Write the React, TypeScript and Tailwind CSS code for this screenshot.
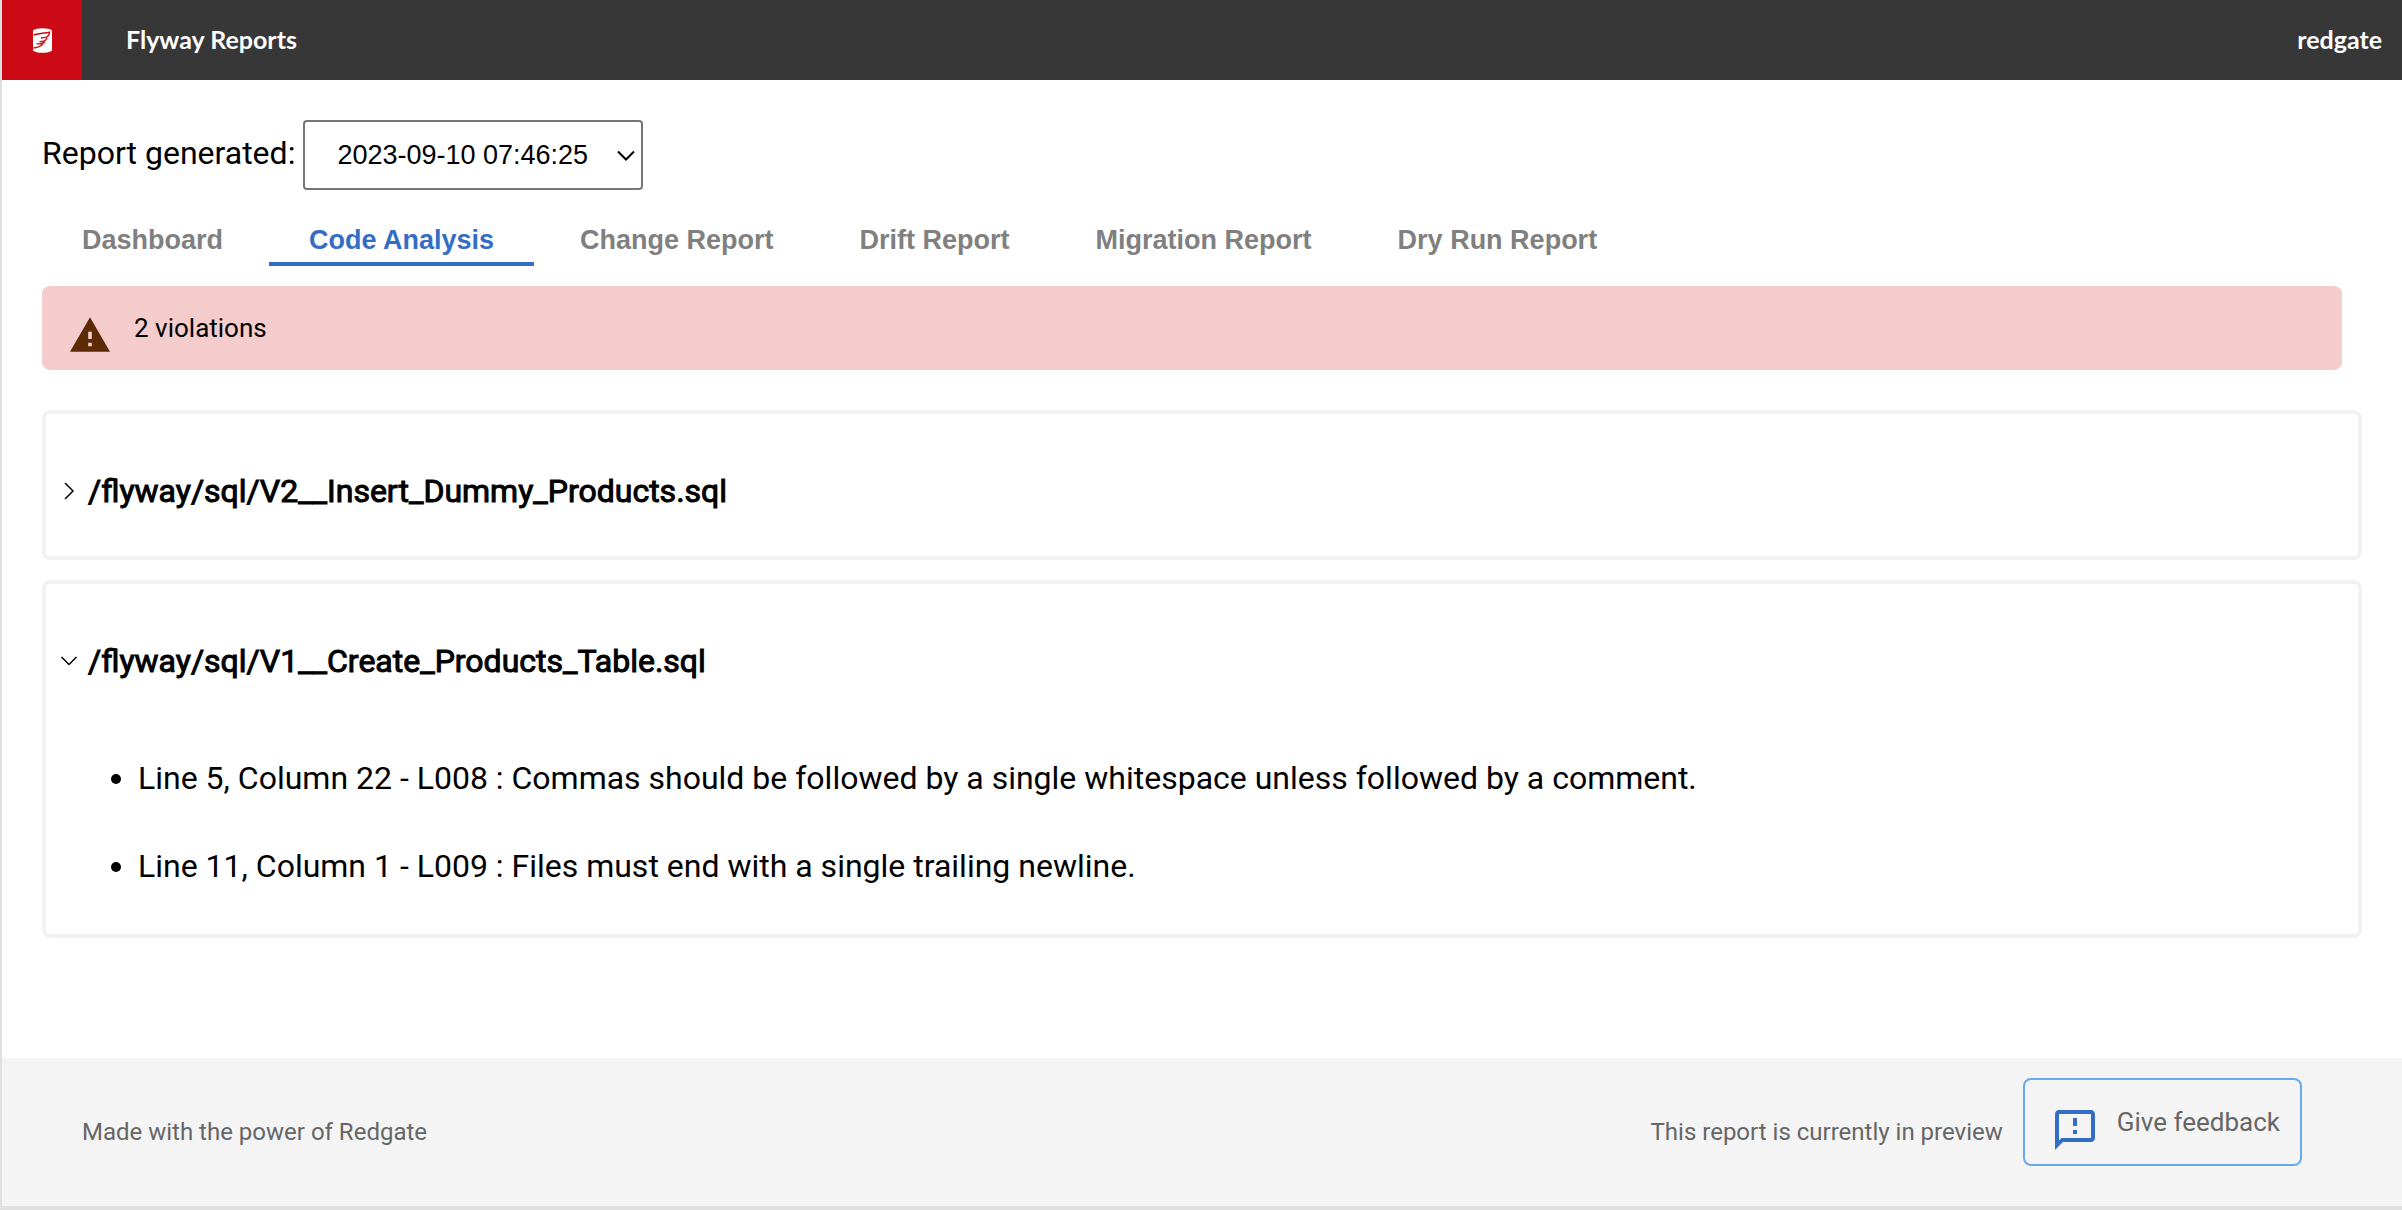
import { useState, type ReactNode } from "react";

const tabs = ["Dashboard", "Code Analysis", "Change Report", "Drift Report", "Migration Report", "Dry Run Report"];

function FlywayLogo() {
  return (
    <svg viewBox="0 0 19 25" className="h-[25px] w-[19px]" aria-hidden="true">
      <path d="M0 2.600C3 -.5 16 -.5 19 2.600V22.400C16 25.500 3 25.500 0 22.400Z" fill="#fff" />
      <path
        d="M.5 7C6 5.400 11 5.200 16.600 4.200C16.400 7 15 8.800 12 9.400L8 10M14 9.600C13.400 12 12 13.200 9 13.500L6.500 13.800M11.600 13.600C10.500 16 8.500 16.500 3.500 15.600M9.500 16C8 18.800 5 19.400 .5 20"
        fill="none"
        stroke="#cc0a15"
        strokeWidth="1.4"
      />
    </svg>
  );
}

function WarningIcon() {
  return (
    <svg viewBox="1 2 22 19" className="mt-3 h-[35px] w-10 shrink-0" fill="#5c2b06" aria-hidden="true">
      <path d="M1 21h22L12 2 1 21zm12-3h-2v-2h2v2zm0-4h-2v-4h2v4z" />
    </svg>
  );
}

function FeedbackIcon() {
  return (
    <svg viewBox="2 2 20 20" className="mt-4 size-10 shrink-0" fill="#346ec4" aria-hidden="true">
      <path d="M20 2H4c-1.1 0-1.99.9-1.99 2L2 22l4-4h14c1.1 0 2-.9 2-2V4c0-1.1-.9-2-2-2zm0 14H5.17l-.59.59-.58.58V4h16v12zm-9-4h2v2h-2zm0-6h2v4h-2z" />
    </svg>
  );
}

function FileCard({ name, initiallyOpen = false, children }: { name: string; initiallyOpen?: boolean; children?: ReactNode }) {
  const [open, setOpen] = useState(initiallyOpen);
  return (
    <section className="rounded-lg border-4 border-[#f2f2f2]">
      <h2>
        <button
          type="button"
          aria-expanded={open}
          onClick={() => setOpen(!open)}
          className="flex h-[142px] w-full items-center gap-2.5 pt-3 pl-3.5 text-left text-[32px] [-webkit-text-stroke:1px_black]"
        >
          <svg viewBox="0 0 18 18" className="size-[18px]" fill="none" stroke="currentColor" strokeWidth="1.5" aria-hidden="true">
            <path d={open ? "M1.500 5l7.500 7.500 7.500-7.500" : "M5 1l8 8-8 8"} />
          </svg>
          {name}
        </button>
      </h2>
      {open && children}
    </section>
  );
}

export default function App() {
  const [active, setActive] = useState("Code Analysis");
  return (
    <div className="flex min-h-screen flex-col border-b-4 border-l-2 border-[#e0e0e0] bg-white font-['Roboto',sans-serif] text-black">
      <header className="flex h-20 items-center bg-[#373737] pr-5 font-['Lato',sans-serif] font-bold text-white">
        <div className="flex size-20 items-center justify-center bg-[#cc0a15]">
          <FlywayLogo />
        </div>
        <h1 className="ml-11 text-[25px]">Flyway Reports</h1>
        <span className="ml-auto text-[25px]">redgate</span>
      </header>

      <main className="grow px-10 pt-10">
        <div className="flex items-baseline gap-2">
          <label htmlFor="report" className="text-[32px]">
            Report generated:
          </label>
          <div className="relative">
            <select
              id="report"
              className="h-[70px] w-[340px] appearance-none rounded-sm border-2 border-[#767676] bg-white pl-8 font-['Liberation_Sans',sans-serif] text-[27px]"
            >
              <option>2023-09-10 07:46:25</option>
            </select>
            <svg
              viewBox="0 0 18 12"
              className="pointer-events-none absolute top-[30px] right-2 h-3 w-[18px]"
              fill="none"
              stroke="currentColor"
              strokeWidth="2"
              aria-hidden="true"
            >
              <path d="M1 1.500l8 8 8-8" />
            </svg>
          </div>
        </div>

        <nav className="mt-4 flex gap-1.5 font-['Liberation_Sans',sans-serif] text-[27px] font-bold" role="tablist">
          {tabs.map((tab) => (
            <button
              key={tab}
              type="button"
              role="tab"
              aria-selected={tab === active}
              onClick={() => setActive(tab)}
              className={
                tab === active
                  ? "h-[60px] border-b-4 border-[#346ec4] px-10 pt-3 text-[#346ec4]"
                  : "h-[60px] border-b-4 border-transparent px-10 pt-3 text-[#808080]"
              }
            >
              {tab}
            </button>
          ))}
        </nav>

        <div role="status" className="mt-5 mr-5 flex h-[84px] items-center gap-6 rounded-lg bg-[#f4cccc] pl-7 text-[26px]">
          <WarningIcon />
          <span>2 violations</span>
        </div>

        <div className="mt-10 flex flex-col gap-5">
          <FileCard name="/flyway/sql/V2__Insert_Dummy_Products.sql" />
          <FileCard name="/flyway/sql/V1__Create_Products_Table.sql" initiallyOpen>
            <ul className="flex list-disc flex-col gap-10 pt-7 pb-11 pl-[92px] text-[32px] leading-[48px]">
              <li>Line 5, Column 22 - L008 : Commas should be followed by a single whitespace unless followed by a comment.</li>
              <li>Line 11, Column 1 - L009 : Files must end with a single trailing newline.</li>
            </ul>
          </FileCard>
        </div>
      </main>

      <footer className="flex h-[148px] items-center bg-[#f4f4f4] pr-[100px] pl-20 text-[24px] text-[#666]">
        <p>Made with the power of Redgate</p>
        <p className="mr-5 ml-auto">This report is currently in preview</p>
        <button type="button" className="mb-5 flex h-[88px] items-center gap-[22px] rounded-lg border-2 border-[#68a9ee] pr-5 pl-[30px] text-[26px]">
          <FeedbackIcon />
          Give feedback
        </button>
      </footer>
    </div>
  );
}
